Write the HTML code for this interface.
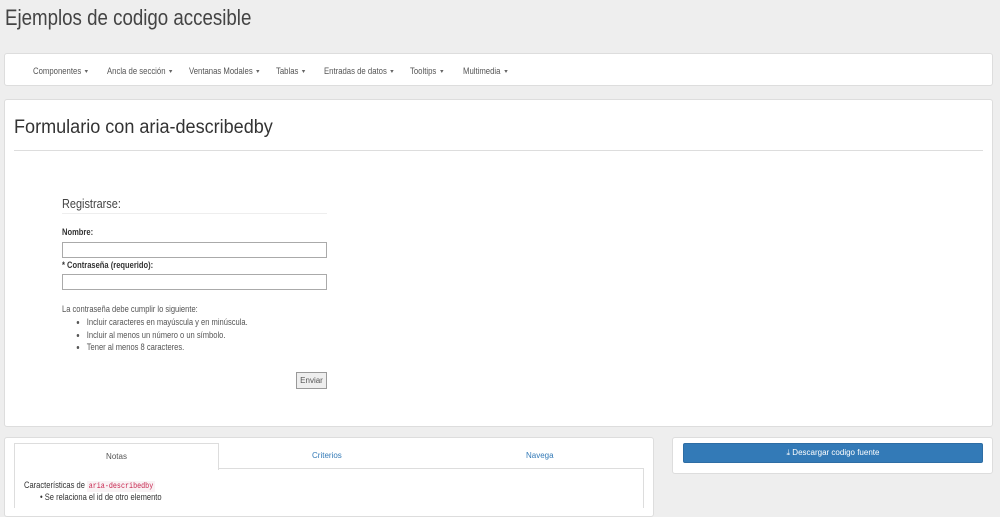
<!DOCTYPE html>
<html><head><meta charset="utf-8"><style>
*{box-sizing:border-box;margin:0;padding:0}
body{width:1000px;height:498px;overflow:hidden;background:#eee;font-family:"Liberation Sans",sans-serif;color:#333;position:relative}
.a{position:absolute;white-space:nowrap}
.s{transform:scaleX(0.84);transform-origin:0 0}
.panel{position:absolute;background:#fff;border:1px solid #ddd;border-radius:3px}
.nav span{position:absolute;top:12px;font-size:9px;color:#555;transform:scaleX(0.86);transform-origin:0 0;white-space:nowrap}
.car{display:inline-block;border-top:3px solid #666;border-left:2.5px solid transparent;border-right:2.5px solid transparent;vertical-align:middle;margin-left:4px}
input{position:absolute;height:16px;border:1px solid #aaa;background:#fff;width:265px;left:62px}
li{font-size:9px;line-height:12.5px}
</style></head><body>
<div class="a s" style="left:5px;top:5px;font-size:22px;color:#444;transform:scaleX(0.85)">Ejemplos de codigo accesible</div>
<div class="panel nav" style="left:4px;top:53px;width:989px;height:33px">
<span style="left:28px">Componentes<i class="car"></i></span>
<span style="left:102px">Ancla de sección<i class="car"></i></span>
<span style="left:184px">Ventanas Modales<i class="car"></i></span>
<span style="left:271px">Tablas<i class="car"></i></span>
<span style="left:319px">Entradas de datos<i class="car"></i></span>
<span style="left:405px">Tooltips<i class="car"></i></span>
<span style="left:458px">Multimedia<i class="car"></i></span>
</div>
<div class="panel" style="left:4px;top:99px;width:989px;height:328px"></div>
<div class="a" style="left:14px;top:117px;font-size:19px;color:#333;transform:scaleX(0.95);transform-origin:0 0">Formulario con aria-describedby</div>
<div class="a" style="left:14px;top:150px;width:969px;border-top:1px solid #ddd"></div>
<div class="a s" style="left:62px;top:196px;font-size:13px;color:#444">Registrarse:</div>
<div class="a" style="left:62px;top:213px;width:265px;border-top:1px solid #eee"></div>
<div class="a s" style="left:62px;top:227px;font-size:9px;font-weight:bold">Nombre:</div>
<input style="top:242px">
<div class="a s" style="left:62px;top:260px;font-size:9px;font-weight:bold">* Contraseña (requerido):</div>
<input style="top:274px">
<div class="a s" style="left:62px;top:304px;font-size:9px;color:#555">La contraseña debe cumplir lo siguiente:</div>
<ul class="a s" style="left:75px;top:316px;color:#555;padding-left:14px">
<li>Incluir caracteres en mayúscula y en minúscula.</li>
<li>Incluir al menos un número o un símbolo.</li>
<li>Tener al menos 8 caracteres.</li></ul>
<div class="a" style="left:296px;top:372px;width:31px;height:17px;border:1px solid #999;background:#eee;font-size:8px;text-align:center;line-height:15px;color:#555">Enviar</div>
<div class="panel" style="left:4px;top:437px;width:650px;height:80px"></div>
<div class="a" style="left:14px;top:468px;width:630px;border-top:1px solid #ddd"></div>
<div class="a" style="left:14px;top:443px;width:205px;height:27px;background:#fff;border:1px solid #ddd;border-bottom:none;font-size:8px;text-align:center;line-height:25px;color:#555">Notas</div>
<div class="a" style="left:312px;top:451px;font-size:8px;color:#337ab7">Criterios</div>
<div class="a" style="left:526px;top:451px;font-size:8px;color:#337ab7">Navega</div>
<div class="a" style="left:14px;top:468px;width:630px;height:40px;border-left:1px solid #ddd;border-right:1px solid #ddd"></div>
<div class="a s" style="left:24px;top:480px;font-size:9px">Características de <code style="font-family:'Liberation Mono',monospace;color:#c7254e;background:#f9f2f4;padding:1px 2px;font-size:8px">aria-describedby</code></div>
<div class="a s" style="left:40px;top:492px;font-size:9px">• Se relaciona el id de otro elemento</div>
<div class="panel" style="left:672px;top:437px;width:321px;height:37px"></div>
<div class="a" style="left:683px;top:443px;width:300px;height:20px;background:#337ab7;border:1px solid #2e6da4;border-radius:2px;color:#fff;font-size:8px;text-align:center;line-height:18px">⤓ Descargar codigo fuente</div>
</body></html>
